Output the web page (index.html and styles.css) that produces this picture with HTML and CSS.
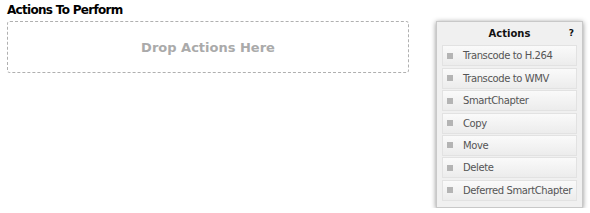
FILE: index.html
```html
<!DOCTYPE html>
<html>
<head>
<meta charset="utf-8">
<link rel="stylesheet" href="styles.css">
</head>
<body>
<div class="page">
  <div class="left">
    <div class="title">Actions To Perform</div>
    <div class="drop">Drop Actions Here</div>
  </div>
  <div class="panel">
    <div class="panel-head">
      <span class="panel-title">Actions</span>
      <span class="help">?</span>
    </div>
    <div class="item"><span class="bullet"></span>Transcode to H.264</div>
    <div class="item"><span class="bullet"></span>Transcode to WMV</div>
    <div class="item"><span class="bullet"></span>SmartChapter</div>
    <div class="item"><span class="bullet"></span>Copy</div>
    <div class="item"><span class="bullet"></span>Move</div>
    <div class="item"><span class="bullet"></span>Delete</div>
    <div class="item"><span class="bullet"></span>Deferred SmartChapter</div>
  </div>
</div>
</body>
</html>
```
FILE: styles.css
```css
html, body {
  margin: 0;
  padding: 0;
  background: #fff;
}
body {
  font-family: "DejaVu Sans", Verdana, sans-serif;
}
.page {
  display: flex;
  align-items: flex-start;
  padding: 2px 0 0 7px;
}
.left {
  width: 402px;
}
.title {
  font-size: 12px;
  font-weight: bold;
  letter-spacing: -0.7px;
  color: #000;
  line-height: 16px;
}
.drop {
  margin-top: 3px;
  height: 50px;
  border: 1px dashed #b0b0b0;
  border-radius: 3px;
  display: flex;
  align-items: center;
  justify-content: center;
  font-size: 13px;
  font-weight: bold;
  color: #aaa;
}
.panel {
  margin-left: 27px;
  margin-top: 19px;
  width: 147px;
  box-sizing: border-box;
  background: #f0f0f0;
  border: 1px solid #c8c8c8;
  box-shadow: 0 1px 5px rgba(0,0,0,0.45);
  padding: 0 5px 6px 5px;
  display: flex;
  flex-direction: column;
  gap: 1.4px;
}
.panel-head {
  display: flex;
  justify-content: center;
  position: relative;
  height: 22px;
  align-items: center;
  font-size: 10px;
  font-weight: bold;
  color: #111;
}
.help {
  position: absolute;
  right: 3px;
  font-size: 9px;
}
.item {
  display: flex;
  align-items: center;
  height: 21px;
  box-sizing: border-box;
  border: 1px solid #e2e2e2;
  background: linear-gradient(#fafafa, #ececec);
  font-size: 10px;
  letter-spacing: -0.4px;
  white-space: nowrap;
  color: #555;
  padding-left: 4px;
}
.bullet {
  flex: none;
  width: 6px;
  height: 6px;
  background: #b4b4b4;
  margin-right: 10px;
}
```
